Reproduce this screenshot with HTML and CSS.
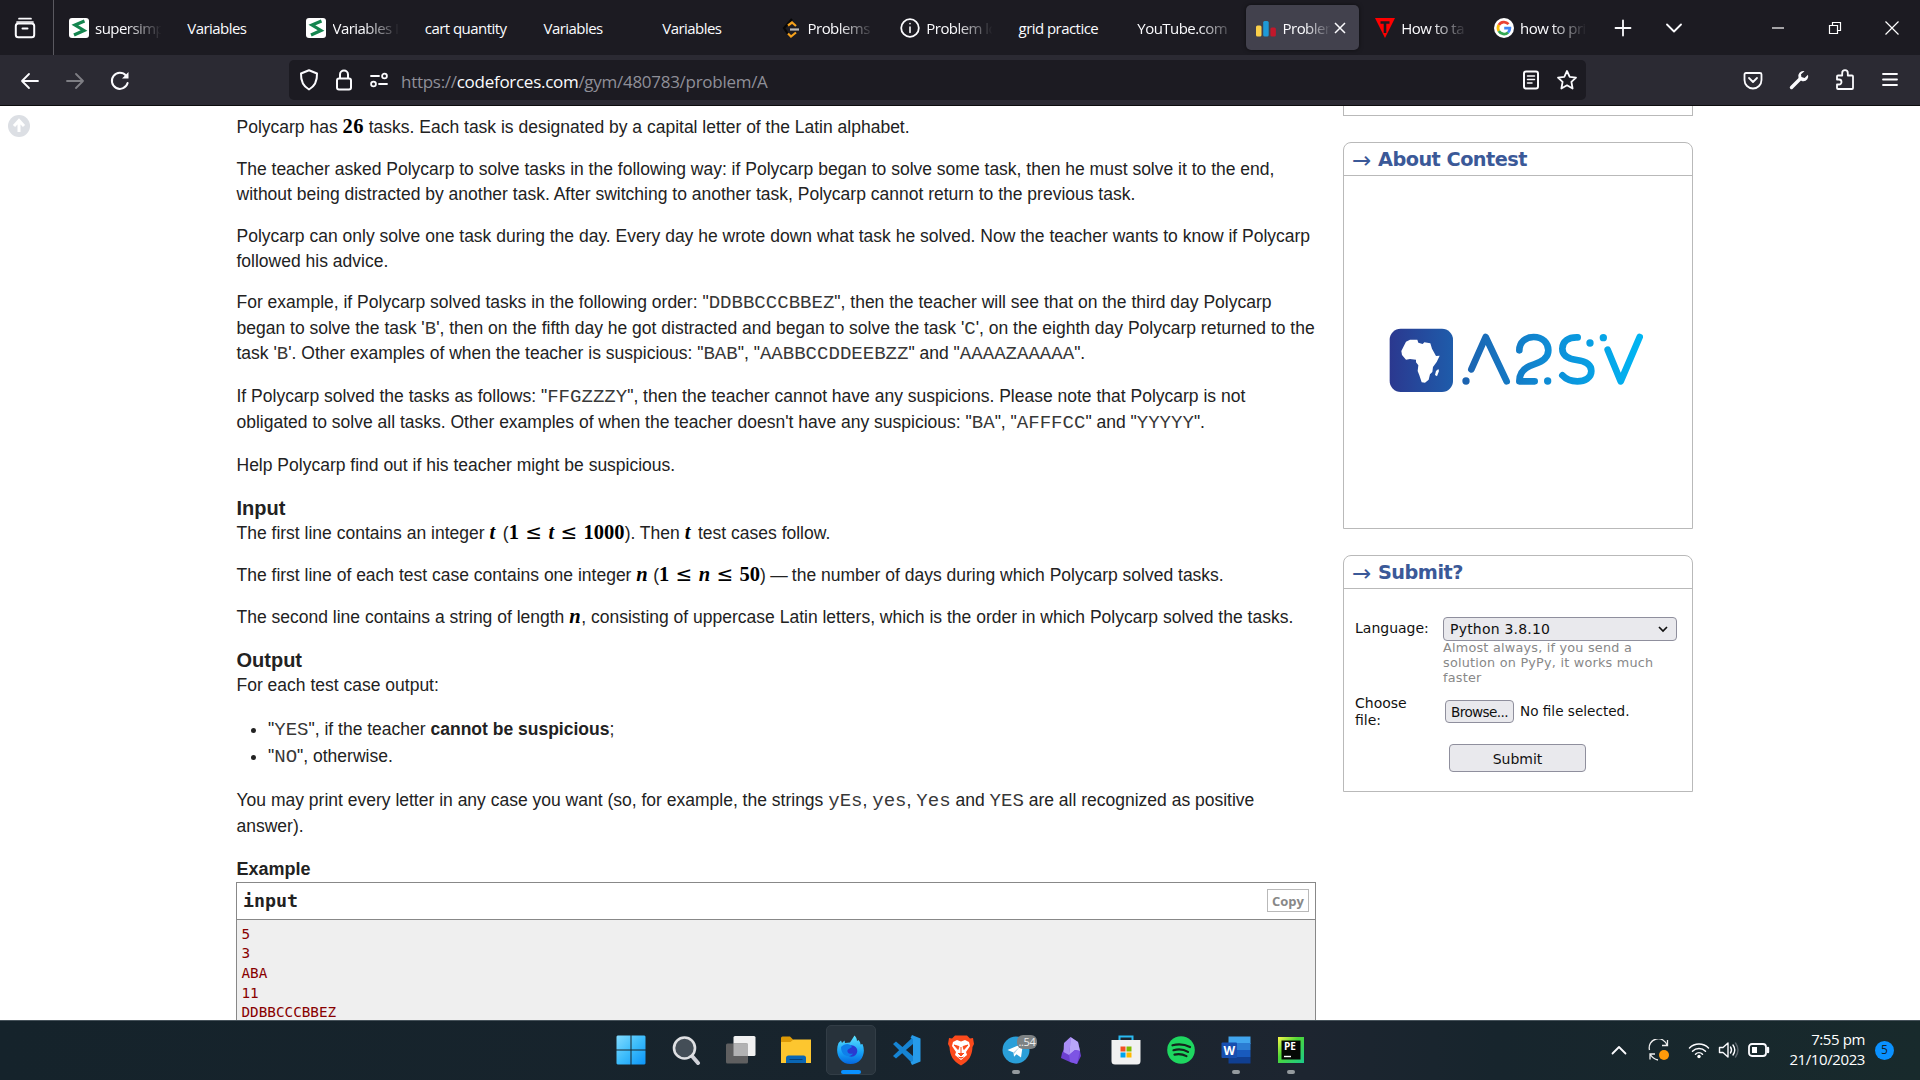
FILE: index.html
```html
<!DOCTYPE html>
<html lang="en">
<head>
<meta charset="utf-8">
<title>Problem - A - Codeforces</title>
<link rel="stylesheet" href="styles.css">
</head>
<body>
<header class="tabbar">
  <div class="view-btn"><svg width="22" height="22" viewBox="0 0 22 22" class="ln"><path d="M5 1.7h12M3 5h16" stroke-width="1.7"/><rect x="1.8" y="6.5" width="18.4" height="13.7" rx="2.5" stroke-width="2"/><path d="M8.5 11.5h5" stroke-width="2"/></svg></div>
  <div class="tabs">
    <div class="tab"><svg class="fav" viewBox="0 0 20 20"><rect width="20" height="20" rx="3" fill="#fff"/><path d="M15.5 3L6 7l9 5.5L5 17" fill="none" stroke="#14854f" stroke-width="3.2"/></svg><span class="fade">supersimp</span></div>
    <div class="tab"><span>Variables</span></div>
    <div class="tab"><svg class="fav" viewBox="0 0 20 20"><rect width="20" height="20" rx="3" fill="#fff"/><path d="M15.5 3L6 7l9 5.5L5 17" fill="none" stroke="#14854f" stroke-width="3.2"/></svg><span class="fade">Variables I</span></div>
    <div class="tab"><span>cart quantity</span></div>
    <div class="tab"><span>Variables</span></div>
    <div class="tab"><span>Variables</span></div>
    <div class="tab"><svg class="fav" viewBox="0 0 20 20" fill="none" stroke-width="2.200"><path d="M11 1L3 10l4 6" stroke="#070707"/><path d="M7 7.500L11 4.500l4 3.500M7 15.500l3 3 5-4" stroke="#f5a11c"/><path d="M9 11.500h9" stroke="#b8b8b8"/></svg><span class="fade">Problems</span></div>
    <div class="tab"><svg class="fav ln" viewBox="0 0 20 20"><circle cx="10" cy="10" r="8.800"/><path d="M10 9v5.500M10 5.600v.1" stroke-width="1.600"/></svg><span class="fade">Problem lo</span></div>
    <div class="tab"><span>grid practice</span></div>
    <div class="tab"><span class="fade wide">YouTube.com</span></div>
    <div class="tab active"><svg class="fav" viewBox="0 0 20 20"><rect y="7.500" width="5.500" height="11" rx="1.500" fill="#fbd04a"/><rect x="7.200" y="3" width="5.500" height="15.500" rx="1.500" fill="#1e9ad8"/><rect x="14.400" y="9.500" width="5.500" height="9" rx="1.500" fill="#c2182b"/></svg><span class="fade">Problem</span><svg class="x" width="12" height="12" viewBox="0 0 12 12"><path d="M1 1l10 10M11 1L1 11"/></svg></div>
    <div class="tab"><svg class="fav" viewBox="0 0 20 20"><path d="M0 0h20L10 20z" fill="#f00"/><path d="M5.500 4.500h9M10 4.500V15" stroke="#1c1b22" stroke-width="2.600"/></svg><span class="fade">How to ta</span></div>
    <div class="tab"><svg class="fav" viewBox="0 0 20 20" fill="none" stroke-width="2.700"><circle cx="10" cy="10" r="10" fill="#fff"/><path d="M14.500 6.100A6 6 0 0 0 4.800 7" stroke="#ea4335"/><path d="M4.800 7a6 6 0 0 0 0 6" stroke="#fbbc05"/><path d="M4.800 13a6 6 0 0 0 9.300 1.400" stroke="#34a853"/><path d="M10.200 10.200h5.700a6 6 0 0 1-1.900 4.300" stroke="#4285f4"/></svg><span class="fade">how to pri</span></div>
  </div>
  <div class="tab-tools">
    <svg width="18" height="18" viewBox="0 0 18 18" class="ln"><path d="M9 1.500v15M1.500 9h15"/></svg>
    <svg width="16" height="10" viewBox="0 0 16 10" class="ln"><path d="M1 1.500l7 7 7-7"/></svg>
  </div>
  <div class="win-ctl">
    <svg width="14" height="14" viewBox="0 0 14 14"><path d="M1 7h12"/></svg>
    <svg width="14" height="14" viewBox="0 0 14 14"><path d="M1.500 4.500h8v8h-8zM4.500 4.500v-3h8v8h-3"/></svg>
    <svg width="14" height="14" viewBox="0 0 14 14"><path d="M.5.500l13 13M13.500.500l-13 13"/></svg>
  </div>
</header>
<nav class="toolbar">
  <div class="nav-btns">
    <svg width="20" height="20" viewBox="0 0 20 20" class="ln"><path d="M18 10H2M9 3L2 10l7 7"/></svg>
    <svg width="20" height="20" viewBox="0 0 20 20" class="ln dim"><path d="M2 10h16M11 3l7 7-7 7"/></svg>
    <svg width="20" height="20" viewBox="0 0 20 20" class="ln"><path d="M17.600 12A8 8 0 1 1 16 4.700" stroke-width="2"/><path d="M18.500 1v6.500H12z" fill="#fbfbfe" stroke="none"/></svg>
  </div>
  <div class="urlbar">
    <svg width="20" height="22" viewBox="0 0 20 22" class="ln"><path d="M10 1.300l8 3.200c.3 8-1.800 12.500-8 16C3.800 17 1.700 12.500 2 4.500z" stroke-width="2"/></svg>
    <svg width="18" height="22" viewBox="0 0 18 22" class="ln"><rect x="2" y="9.500" width="14" height="11" rx="2" stroke-width="2"/><path d="M5 9V5.500a4 4 0 0 1 8 0V9" stroke-width="2"/></svg>
    <svg width="20" height="16" viewBox="0 0 20 16" class="ln"><path d="M2 4h8M10 12h8" stroke-width="1.800"/><circle cx="15.500" cy="4" r="2.400"/><circle cx="4.500" cy="12" r="2.400"/></svg>
    <div class="url">https://<b>codeforces.com</b>/gym/480783/problem/A</div>
    <svg width="18" height="20" viewBox="0 0 18 20" class="ln"><rect x="2" y="1.500" width="14" height="17" rx="2" stroke-width="2"/><path d="M5.500 6h7M5.500 9.500h7M5.500 13h4.500" stroke-width="1.500"/></svg>
    <svg width="22" height="22" viewBox="0 0 22 22" class="ln"><path d="M11 2l2.700 5.800 6.300.8-4.600 4.300 1.200 6.600L11 16.300l-5.600 3.200 1.200-6.600L2 8.600l6.300-.8z"/></svg>
  </div>
  <div class="tool-right">
    <svg width="20" height="20" viewBox="0 0 20 20" class="ln"><path d="M3 3h14q1.500 0 1.500 1.500V10a8.500 8.500 0 0 1-17 0V4.500Q1.500 3 3 3z"/><path d="M6 8l4 4 4-4"/></svg>
    <svg width="20" height="20" viewBox="0 0 20 20"><path d="M2.500 17.500L11 9" stroke="#fbfbfe" stroke-width="3.400" stroke-linecap="round"/><path d="M15.500 1.200a5 5 0 0 0-6 6.500 5 5 0 0 0 8.800 1.500 5 5 0 0 0 .7-4.400L15.600 8l-3.200-1-.4-2.700z" fill="#fbfbfe"/></svg>
    <svg width="20" height="22" viewBox="0 0 20 22" class="ln"><path d="M3 6.500h4.200V4a2.800 2.800 0 0 1 5.600 0v2.500H17q1 0 1 1V19q0 1-1 1H3q-1 0-1-1v-3.500h2a2.500 2.500 0 0 0 0-5H2v-3q0-1 1-1z"/></svg>
    <svg width="18" height="16" viewBox="0 0 18 16" class="ln"><path d="M2 2h14M2 7.500h14M2 13h14"/></svg>
  </div>
</nav>

<main class="page">
  <div class="gutter"><svg width="24" height="24" viewBox="0 0 24 24"><circle cx="12" cy="12" r="11" fill="#dcdfe4"/><path d="M12 18V8M7 12l5-5.500L17 12" fill="none" stroke="#fff" stroke-width="3"/></svg></div>
  <article class="problem">
    <p>Polycarp has <span class="m num">26</span> tasks. Each task is designated by a capital letter of the Latin alphabet.</p>
    <p>The teacher asked Polycarp to solve tasks in the following way: if Polycarp began to solve some task, then he must solve it to the end,<br>without being distracted by another task. After switching to another task, Polycarp cannot return to the previous task.</p>
    <p class="tight">Polycarp can only solve one task during the day. Every day he wrote down what task he solved. Now the teacher wants to know if Polycarp<br>followed his advice.</p>
    <p class="c">For example, if Polycarp solved tasks in the following order: "<tt>DDBBCCCBBEZ</tt>", then the teacher will see that on the third day Polycarp<br>began to solve the task '<tt>B</tt>', then on the fifth day he got distracted and began to solve the task '<tt>C</tt>', on the eighth day Polycarp returned to the<br>task '<tt>B</tt>'. Other examples of when the teacher is suspicious: "<tt>BAB</tt>", "<tt>AABBCCDDEEBZZ</tt>" and "<tt>AAAAZAAAAA</tt>".</p>
    <p class="c">If Polycarp solved the tasks as follows: "<tt>FFGZZZY</tt>", then the teacher cannot have any suspicions. Please note that Polycarp is not<br>obligated to solve all tasks. Other examples of when the teacher doesn't have any suspicious: "<tt>BA</tt>", "<tt>AFFFCC</tt>" and "<tt>YYYYY</tt>".</p>
    <p class="more">Help Polycarp find out if his teacher might be suspicious.</p>
    <h2>Input</h2>
    <p>The first line contains an integer <i class="m t">t</i> (<span class="m eq e1"><span>1</span><span class="le">≤</span><i>t</i><span class="le">≤</span><span>1000</span></span>). Then <i class="m t">t</i> test cases follow.</p>
    <p>The first line of each test case contains one integer <i class="m n">n</i> (<span class="m eq e2"><span>1</span><span class="le">≤</span><i>n</i><span class="le">≤</span><span>50</span></span>)<span class="dash">—</span>the number of days during which Polycarp solved tasks.</p>
    <p class="more">The second line contains a string of length <i class="m n">n</i>, consisting of uppercase Latin letters, which is the order in which Polycarp solved the tasks.</p>
    <h2>Output</h2>
    <p class="more">For each test case output:</p>
    <ul>
      <li>"<tt>YES</tt>", if the teacher <b>cannot be suspicious</b>;</li>
      <li>"<tt>NO</tt>", otherwise.</li>
    </ul>
    <p class="c last">You may print every letter in any case you want (so, for example, the strings <tt>yEs</tt>, <tt>yes</tt>, <tt>Yes</tt> and <tt>YES</tt> are all recognized as positive<br>answer).</p>
    <h3>Example</h3>
    <div class="sample">
      <div class="sample-head"><span>input</span><span class="copy">Copy</span></div>
      <pre>5
3
ABA
11
DDBBCCCBBEZ</pre>
    </div>
  </article>
  <aside class="side">
    <div class="stub"></div>
    <section class="box about">
      <h4><span class="arr">→</span>About Contest</h4>
      <div class="logo"><svg width="254" height="65" viewBox="177 683 762 195">
        <defs><linearGradient id="lg" gradientUnits="userSpaceOnUse" x1="178" y1="0" x2="938" y2="0"><stop offset="0" stop-color="#2b388f"/><stop offset=".3" stop-color="#1c63b0"/><stop offset=".65" stop-color="#0d8fd8"/><stop offset="1" stop-color="#00b6f3"/></linearGradient></defs>
        <rect x="179" y="685" width="190" height="190" rx="33" fill="url(#lg)"/>
        <path d="M228 724l12-6h22l3 9 13 4 5-5 18 3 5 16 12 22 11-1-9 19-11 15-2 15-7 7-4 16-11 9-10-1-7-21-5-13 2-17-7-9v-8l-18-2-12 2-12-14-2-12 6-12zM318 812l7-6 2 6-6 16-6-4z" fill="#fff"/>
        <g fill="none" stroke="url(#lg)" stroke-width="20" stroke-linecap="round" stroke-linejoin="round"><path d="M424 807l43-97 63 133"/><path d="M568 750c0-25 20-40 43-40 27 0 44 18 44 40 0 25-20 35-43 42-27 8-44 23-44 51h46"/><path d="M743 711c-28-1-46 12-46 34 0 25 23 31 43 34 30 4 44 15 44 33 0 20-19 31-42 31-20 0-34-6-45-18"/><path d="M833 748l39 95 57-133"/></g>
        <g fill="url(#lg)"><circle cx="408" cy="842" r="11"/><circle cx="653" cy="842" r="11"/><circle cx="780" cy="728" r="11"/><circle cx="820" cy="712" r="11"/></g>
      </svg></div>
    </section>
    <section class="box submit">
      <h4><span class="arr">→</span>Submit?</h4>
      <div class="form">
        <label class="lang">Language:</label>
        <div class="cell"><div class="select"><span>Python 3.8.10</span><svg width="10" height="7" viewBox="0 0 10 7"><path d="M1 1l4 4 4-4" fill="none" stroke="#111" stroke-width="1.700"/></svg></div>
        <div class="note">Almost always, if you send a<br>solution on PyPy, it works much<br>faster</div></div>
        <label>Choose<br>file:</label>
        <div class="file"><span class="browse">Browse...</span><span>No file selected.</span></div>
      </div>
      <div class="submit-btn">Submit</div>
    </section>
  </aside>
</main>

<footer class="taskbar">
  <div class="apps">
    <div class="app"><svg width="30" height="30" viewBox="0 0 30 30"><defs><linearGradient id="w" x1="0" y1="0" x2="30" y2="30" gradientUnits="userSpaceOnUse"><stop offset="0" stop-color="#85dcff"/><stop offset=".5" stop-color="#3cbcfb"/><stop offset="1" stop-color="#0a93f8"/></linearGradient></defs><path d="M1.500.500h13v14h-14v-13zM15.500.500h13l1 1v13h-14zM.5 15.500h14v14h-13l-1-1zM15.500 15.500h14v13l-1 1h-13z" fill="url(#w)"/></svg></div>
    <div class="app"><svg width="30" height="30" viewBox="0 0 30 30"><path d="M21 21l6 7" stroke="#cfd1d8" stroke-width="4" stroke-linecap="round"/><circle cx="13.500" cy="13" r="10.500" fill="#444e57" stroke="#dfe0e3" stroke-width="2.600"/></svg></div>
    <div class="app"><svg width="30" height="30" viewBox="0 0 30 30"><rect x="7.500" y="1" width="22" height="20" rx="1.500" fill="#f1f1f1"/><rect x="0" y="8.500" width="22" height="20" rx="1.500" fill="#5f5f60"/><path d="M7.500 8.500H22V21H7.500z" fill="#b2b2b3"/></svg></div>
    <div class="app"><svg width="30" height="30" viewBox="0 0 30 30"><path d="M0 3q0-1.500 1.500-1.500H9L12.500 5v6H0z" fill="#dd9a06"/><path d="M0 7h9.500l3-2.500H30V28H0z" fill="#fdc62f"/><path d="M5 28v-5q0-2.500 2.500-2.500h15Q25 20.500 25 23v5z" fill="#0a66b4"/><path d="M8.500 24.500h13" stroke="#063f76"/></svg></div>
    <div class="app current"><svg width="30" height="30" viewBox="0 0 30 30"><defs><linearGradient id="f" x1="0" y1="0" x2="0" y2="1"><stop offset="0" stop-color="#5ee3ff"/><stop offset=".6" stop-color="#16a0f5"/><stop offset="1" stop-color="#0567e0"/></linearGradient></defs><path d="M2.500 8L5 5.500 6 8l2.500-2.500.5 2.500 5-.5C15.500 5 17 3 18.500.500c1.500 1.500 2.500 3.500 2.500 5.500l1.500-1c1.500 1.500 2 3 2 4.500l2-.5c4 9-1 20-12 20C3.500 29-1.500 18 2.500 8z" fill="url(#f)"/><circle cx="15.500" cy="16" r="5.800" fill="#293ad0"/><path d="M5 12c4-4 9-4 11 0l-4 2.500c-2 2 1 5.500 5 4-3 5-12 3-12-6.500z" fill="#0f7fea"/></svg><i class="run"></i></div>
    <div class="app"><svg width="32" height="32" viewBox="0 0 32 32"><path d="M3 22L23 3v7L6 24.500zM3 10l3-2.500L23 22v8z" fill="#1684d3"/><path d="M22 1l8.500 3.500v23L22 31l-1.500-3 2.500-1V5l-2.500-1z" fill="#269be9"/></svg></div>
    <div class="app"><svg width="30" height="32" viewBox="0 0 30 32"><path d="M9 1.500h12l3 3 3-.5 1 6-1.500 3C26 22 23 27 15 31.500 7 27 4 22 3.500 13L2 10l1-6 3 .5z" fill="#fb4a1c"/><path d="M7 8l4-2 4 1.500L19 6l4 2 1 4-4 6 1 3-6 5-6-5 1-3-4-6z" fill="#fff"/><path d="M8 11l5 1.500-1 3zM22 11l-5 1.500 1 3zM15 13v7M12 19l3 3 3-3M12.500 23l2.500 1.200 2.500-1.200" fill="#fb4a1c" stroke="#fb4a1c"/></svg></div>
    <div class="app"><svg width="28" height="28" viewBox="0 0 28 28"><circle cx="14" cy="14" r="13.500" fill="#2a9fd9"/><path d="M5.500 14L21 7.500 19 21.500l-4.500-3.300-2.500 2.500-.5-4.200z" fill="#fff"/><path d="M11.500 16.500L18 10.500l-6 7.500z" fill="#a9cee3"/></svg><span class="badge">..54</span><i class="dot"></i></div>
    <div class="app"><svg width="24" height="30" viewBox="0 0 24 30"><path d="M11.500 2L19 7l2 9 1 5-4 8-7-2-9-4 1-5z" fill="#6c3fd0"/><path d="M11.500 2L5 8l-.5 9 5.500 3 1-8z" fill="#a98df5"/><path d="M11.500 2L19 7l2 9-5-1-6 5 1-8z" fill="#b9a6f8"/><path d="M10 20l6-5 5 1-3 13-7-2z" fill="#7d54e4"/></svg></div>
    <div class="app"><svg width="30" height="30" viewBox="0 0 30 30"><path d="M8.500 5V1.500h13V5" fill="none" stroke="#2abaf1" stroke-width="2"/><path d="M.5 5h29v21q0 3.500-3.500 3.500H4Q.500 29.500.500 26z" fill="#f1f1f1"/><path d="M9.500 11.500h5v5h-5z" fill="#f25022"/><path d="M15.500 11.500h5v5h-5z" fill="#7fba00"/><path d="M9.500 17.500h5v5h-5z" fill="#00a4ef"/><path d="M15.500 17.500h5v5h-5z" fill="#ffb900"/></svg></div>
    <div class="app"><svg width="28" height="28" viewBox="0 0 28 28"><circle cx="14" cy="14" r="13.800" fill="#1ed760"/><path d="M5.500 9.300c6-1.500 12-1 17.500 1.700M6.500 14.200c5-1.300 10-1 14.500 1.700M7.500 18.600c4-1 8-.6 12 1.500" fill="none" stroke="#14251d" stroke-width="2.200" stroke-linecap="round"/></svg></div>
    <div class="app"><svg width="30" height="28" viewBox="0 0 30 28"><path d="M7.500.500h22V8h-22z" fill="#41a5ee"/><path d="M7.500 7h22v7h-22z" fill="#2b7cd3"/><path d="M7.500 14h22v7h-22z" fill="#185abd"/><path d="M7.500 21h22v6.500h-22z" fill="#103f91"/><rect x=".5" y="6.500" width="15.500" height="15.500" rx="1" fill="#174fb0"/><text x="8.200" y="18.700" class="word">W</text></svg><i class="dot"></i></div>
    <div class="app"><svg width="26" height="26" viewBox="0 0 26 26"><defs><linearGradient id="p" x1="0" y1="0" x2="1" y2="1"><stop offset="0" stop-color="#fcf84a"/><stop offset=".4" stop-color="#4fd836"/><stop offset="1" stop-color="#1ac98b"/></linearGradient></defs><path d="M0 0h26v26H0z" fill="url(#p)"/><path d="M3.500 3.500h19v19h-19z" fill="#050805"/><path d="M6 19.500h7" stroke="#fff" stroke-width="1.400"/><text x="12" y="13" class="pe">PE</text></svg><i class="dot"></i></div>
  </div>
  <div class="tray">
    <svg width="16" height="10" viewBox="0 0 16 10" class="ln"><path d="M1.500 8.500L8 2l6.500 6.500"/></svg>
    <svg class="sync" width="22" height="22" viewBox="0 0 22 22"><g fill="none" stroke="#eee" stroke-width="1.300"><path d="M1.500 11A8.500 8.500 0 0 1 19 6.500M19.500 1v5.500H14M2 20.500V15h5M2 15q3 5 8 6"/></g><circle cx="16" cy="16" r="5" fill="#ff9a0a"/></svg>
    <svg width="22" height="18" viewBox="0 0 22 18" class="ln"><path d="M1.500 7a13.500 13.500 0 0 1 19 0M4.500 10.200a9.300 9.300 0 0 1 13 0M7.500 13.200a5 5 0 0 1 7 0" stroke-width="1.500"/><circle cx="11" cy="15.500" r="1.700" fill="#fff" stroke="none"/></svg>
    <svg width="22" height="18" viewBox="0 0 22 18" class="ln"><path d="M1.500 6.500H5l5-4.500v14L5 11.500H1.500zM12.500 6q2 3 0 6M15 4q3.500 5 0 10" stroke-width="1.400"/><path d="M17.500 2q5 7 0 14" stroke="#5c656c" stroke-width="1.400"/></svg>
    <svg width="22" height="14" viewBox="0 0 22 14" class="ln"><rect x="1" y="1" width="17" height="12" rx="3"/><path d="M4 4h5v6H4z" fill="#fff" stroke="none"/><path d="M20 5v4" stroke-width="2.400"/></svg>
    <div class="clock"><div class="time">7:55 pm</div><div class="date">21/10/2023</div></div>
    <div class="count">5</div>
  </div>
</footer>
</body>
</html>
```
FILE: styles.css
```css
* { box-sizing: border-box; }
body { margin: 0; width: 1920px; height: 1080px; overflow: hidden; background: #fff; display: flex; flex-direction: column; font-family: "Liberation Sans", Arial, sans-serif; }
svg { display: block; flex: none; }
.ln { fill: none; stroke: #fbfbfe; stroke-width: 1.8; stroke-linecap: round; stroke-linejoin: round; }
.dim { opacity: .4; }

/* tab strip */
.tabbar { height: 55px; flex: none; background: #1c1b22; display: flex; color: #fbfbfe; font: 15px "Open Sans", "Noto Sans", sans-serif; }
.view-btn { width: 54px; border-right: 1px solid #5a5960; display: flex; align-items: center; padding-left: 14px; }
.tabs { display: flex; padding-left: 4.600px; align-items: center; }
.tab { width: 118.75px; height: 45px; padding-left: 10px; display: flex; align-items: center; white-space: nowrap; letter-spacing: -.55px; }
.fav { width: 20px; height: 20px; margin-right: 6.500px; }
.fade { width: 68px; overflow: hidden; mask-image: linear-gradient(90deg, #000 45%, transparent 98%); }
.fade.wide { width: 94px; mask-image: linear-gradient(90deg, #000 65%, transparent 105%); }
.tab.active { width: 113px; margin-right: 5.750px; background: #42414d; border-radius: 5px; box-shadow: 0 0 4px #0008; }
.active .fade { width: 49px; }
.x { margin-left: 2px; fill: none; stroke: #fbfbfe; stroke-width: 1.500; }
.tab-tools { display: flex; align-items: center; gap: 34px; margin-left: 12px; }
.win-ctl { display: flex; align-items: center; gap: 43px; margin-left: auto; padding-right: 21px; fill: none; stroke: #fff; stroke-width: 1.200; }

/* address row */
.toolbar { height: 51px; flex: none; background: #2b2a33; border-bottom: 1px solid #0c0c0d; display: flex; align-items: center; }
.nav-btns { width: 289px; display: flex; gap: 25px; padding: 1px 0 0 20px; }
.urlbar { width: 1297px; height: 40px; background: #1c1b22; border-radius: 5px; display: flex; align-items: center; padding: 0 8px 0 10px; gap: 16px; }
.url { flex: 1; font: 17px/26px "Open Sans", "Noto Sans", sans-serif; letter-spacing: -.280px; color: #8f8f98; margin-left: -4px; padding-top: 3px; white-space: nowrap; }
.url b { font-weight: 400; color: #fbfbfe; }
.tool-right { flex: 1; display: flex; align-items: center; gap: 26px; justify-content: flex-end; padding-right: 21px; }

/* page */
.page { flex: 1; min-height: 0; overflow: hidden; display: flex; }
.gutter { width: 236px; padding: 8px 0 0 7px; }
.problem { width: 1080px; padding-top: 9px; color: #222; font-size: 17.500px; }
.problem p { margin: 0 0 17px; padding-left: .500px; line-height: 25px; white-space: nowrap; }
.problem p.tight { line-height: 24.500px; }
.problem p.c { line-height: 25.500px; margin-bottom: 17.500px; }
.problem p.more { margin-bottom: 18px; }
.problem p.last { line-height: 26px; margin-bottom: 18px; }
.problem h2 { margin: 0; padding-left: .500px; font-size: 20px; line-height: 25px; }
.problem h3 { margin: 0; padding-left: .500px; font-size: 18px; line-height: 25px; }
.problem tt { font-family: "Liberation Mono", monospace; font-size: 19.060px; line-height: 1px; color: #383838; }
.m { font-family: "Liberation Serif", serif; font-size: 20.500px; font-weight: 700; color: #000; line-height: 1px; }
.num { letter-spacing: .400px; }
.t { display: inline-block; width: 8.500px; }
.n { display: inline-block; width: 12px; }
.eq { display: inline-flex; justify-content: space-between; align-items: baseline; }
.eq span, .eq i { line-height: 1; }
.eq .le { font: 400 20px/1 "DejaVu Sans", sans-serif; }
.e1 { width: 116px; }
.e2 { width: 101px; }
.dash { margin: 0 4px 0 4.500px; }
.problem ul { margin: 18px 0 17px; padding-left: 32px; line-height: 27px; }
.sample { border: 1px solid #888; }
.sample-head { height: 37px; border-bottom: 1px solid #888; display: flex; align-items: center; justify-content: space-between; padding: 0 6px; font: 700 18.300px "DejaVu Sans Mono", monospace; }
.copy { border: 1px solid #b9b9b9; height: 23px; width: 42px; font: 700 13px/22px "Open Sans", sans-serif; color: #888; text-align: center; }
.sample pre { margin: 0; background: #efefef; color: #880000; padding: 5px 4.500px; font: 14.300px/19.700px "DejaVu Sans Mono", monospace; height: 130px; }

/* sidebar */
.side { width: 350px; margin-left: 27px; font-family: Verdana, "DejaVu Sans", sans-serif; color: #111; }
.stub { height: 10px; border: 1px solid #b9b9b9; border-top: 0; }
.box { border: 1px solid #b9b9b9; border-radius: 8px 8px 0 0; margin-top: 26px; }
.box h4 { margin: 0; height: 33px; border-bottom: 1px solid #b9b9b9; padding-left: 8px; color: #3b5998; font-size: 19.300px; letter-spacing: -.520px; line-height: 33px; display: flex; }
.arr { width: 26px; font-size: 23px; font-weight: 400; padding-top: 1px; }
.about { height: 387px; }
.logo { padding: 152px 0 0 45px; }
.submit { height: 237px; }
.form { display: grid; grid-template-columns: 88px 1fr; padding: 28px 15px 0 11px; font-size: 14px; line-height: 17px; }
.lang { padding-top: 3px; }
.select { height: 24px; border: 1px solid #8f8f9d; border-radius: 4px; background: #e9e9ed; display: flex; align-items: center; justify-content: space-between; padding: 0 8px 0 6px; font-size: 14px; letter-spacing: .200px; }
.note { font-size: 12.800px; line-height: 15px; letter-spacing: .220px; color: #888; white-space: nowrap; margin: -1px 0 10px; }
.file { display: flex; align-items: center; gap: 6px; padding: 0 0 1px 2px; white-space: nowrap; font-size: 13.600px; }
.browse { border: 1px solid #8f8f9d; border-radius: 4px; background: #e9e9ed; width: 69px; height: 23px; line-height: 22px; text-align: center; letter-spacing: -.600px; }
.submit-btn { width: 137px; height: 28px; margin: 15px 0 0 105px; border: 1px solid #8f8f9d; border-radius: 4px; background: #e9e9ed; text-align: center; font-size: 14px; line-height: 28px; }

/* taskbar */
.taskbar { height: 60px; flex: none; background: linear-gradient(90deg, #15232b, #18242d 45%, #1d2530 68%, #17252d 78%, #182a2c); border-top: 1px solid #46525a; display: flex; }
.apps { display: flex; padding: 0 0 1px 603px; align-items: center; }
.app { position: relative; width: 55px; height: 50px; display: flex; align-items: center; justify-content: center; }
.app.current { width: 50px; margin: 0 2.500px; background: #27323b; border: 1px solid #323d46; border-radius: 5px; }
.run { position: absolute; bottom: 0; left: 14px; width: 20px; height: 4px; border-radius: 2px; background: #0a91ff; }
.dot { position: absolute; bottom: 1px; left: 24px; width: 8px; height: 4px; border-radius: 2px; background: #949a9e; }
.badge { position: absolute; left: 29px; top: 10px; width: 20px; height: 14px; border-radius: 6px; background: #7d8284; color: #eee; font: 11px/14px "Open Sans", sans-serif; text-align: center; letter-spacing: -.300px; }
.word { font: 700 12px "Open Sans", sans-serif; fill: #fff; text-anchor: middle; }
.pe { font: 700 10px "Open Sans", sans-serif; fill: #fff; text-anchor: middle; }
.tray { margin-left: auto; display: flex; align-items: center; padding: 0 26px 1px 0; color: #fff; font-family: "Open Sans", "Noto Sans", sans-serif; }
.tray svg { margin-right: 8px; }
.tray svg:first-child { margin-right: 21px; }
.tray .sync { margin-right: 18px; }
.clock { width: 87px; text-align: right; font-size: 15px; line-height: 20px; letter-spacing: -.400px; padding-bottom: 3px; }
.count { width: 19px; height: 19px; margin-left: 10px; border-radius: 50%; background: #0a91ff; color: #10202c; font-size: 12px; line-height: 18px; text-align: center; }
```
